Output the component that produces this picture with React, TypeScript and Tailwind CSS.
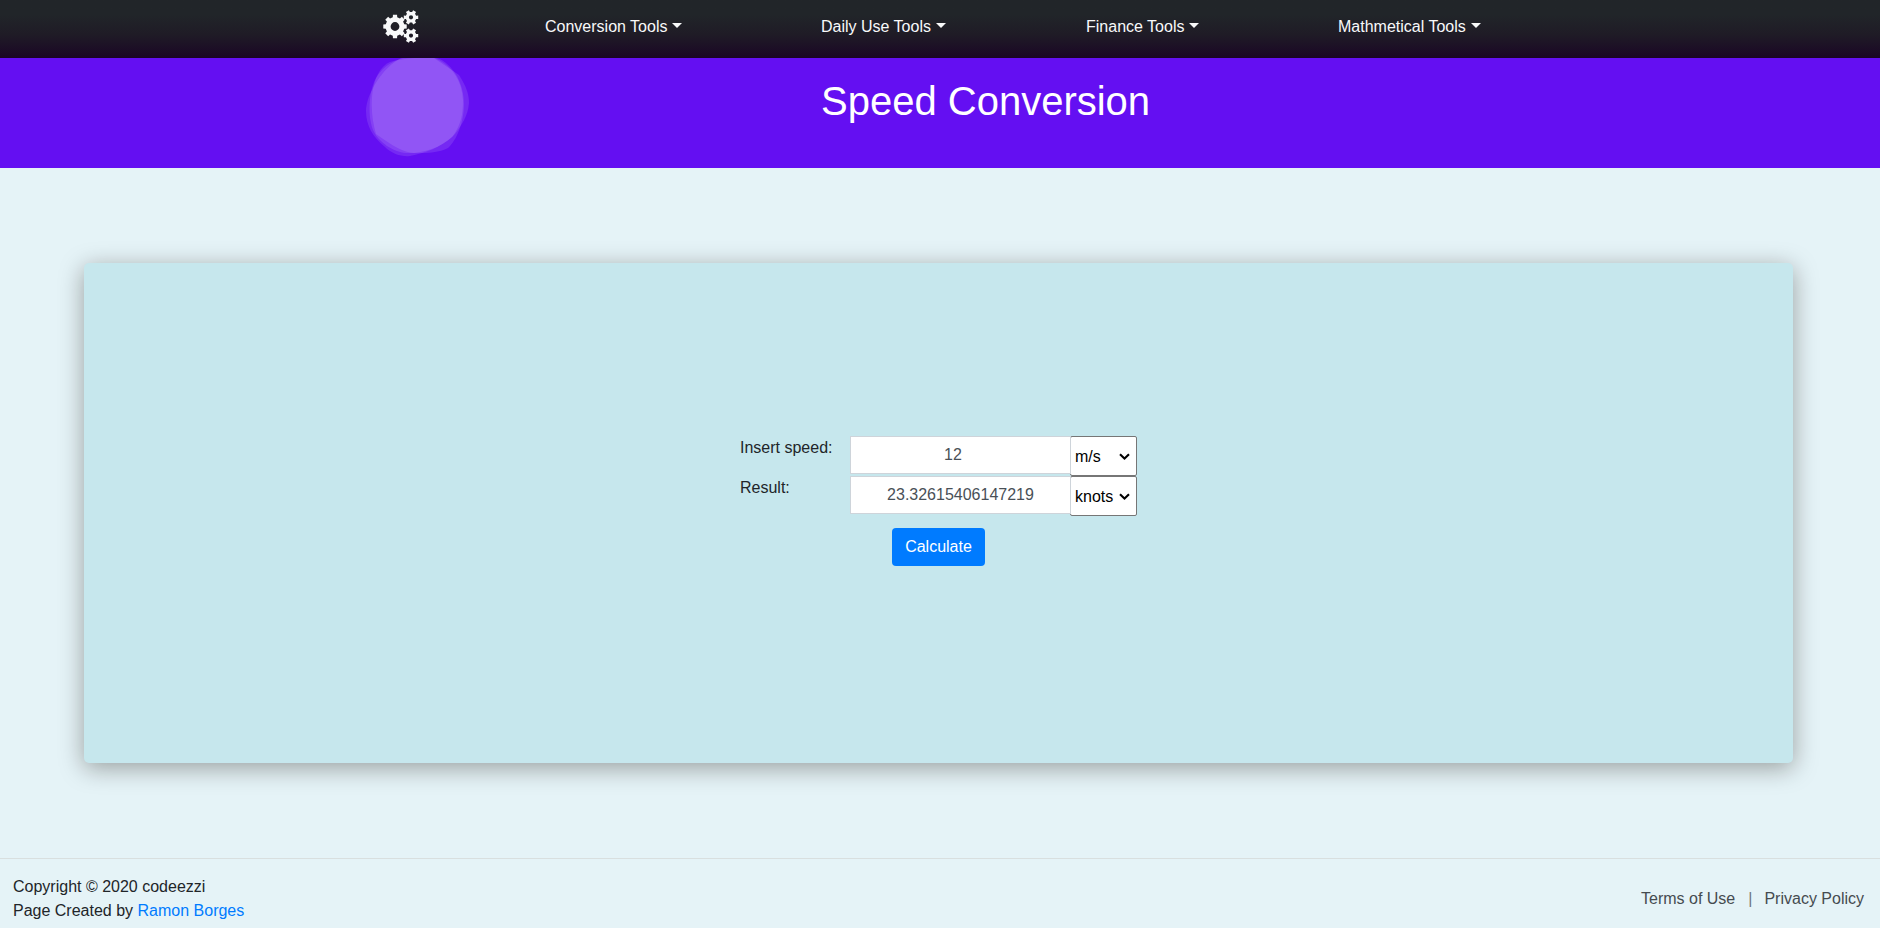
import React, { useState } from "react";

function gearPath(cx: number, cy: number, inner: number, outer: number, hole: number, teeth: number, start: number) {
  const pts: string[] = [];
  const step = (Math.PI * 2) / teeth;
  const at = (r: number, a: number) => `${(cx + r * Math.cos(a)).toFixed(2)} ${(cy + r * Math.sin(a)).toFixed(2)}`;
  for (let i = 0; i < teeth; i++) {
    const a = start + i * step;
    pts.push(at(inner, a - step * 0.3), at(outer, a - step * 0.22), at(outer, a + step * 0.22), at(inner, a + step * 0.3));
  }
  return `M${pts.join("L")}ZM${cx - hole} ${cy}a${hole} ${hole} 0 1 0 ${hole * 2} 0a${hole} ${hole} 0 1 0 ${-hole * 2} 0Z`;
}

function GearsLogo() {
  return (
    <svg width="36" height="33" viewBox="0 0 36 33" fill="#f8f9fa" fillRule="evenodd" className="shrink-0">
      <path d={gearPath(12, 16.5, 9.5, 11.9, 4.4, 8, 0)} />
      <path d={gearPath(28, 7.3, 5.4, 7.4, 2.1, 6, 0)} />
      <path d={gearPath(28, 25.6, 5.4, 7.4, 2.1, 6, 0)} />
    </svg>
  );
}

function NavItem({ label, className }: { label: string; className: string }) {
  return (
    <a href="#" className={`flex shrink-0 items-center whitespace-nowrap text-[#f8f9fa] ${className}`}>
      {label}
      <span className="mb-[3px] ml-[5px] border-x-[5px] border-t-[5px] border-x-transparent border-t-[#f8f9fa]" />
    </a>
  );
}

function Blob() {
  return (
    <svg width="106" height="110" viewBox="364 58 106 110" className="shrink-0" fill="#ffffff">
      <path fillOpacity="0.11" d="M401 58C412 54 428 54 439 60C452 67 462 80 463 100C463 113 462 123 453 136C440 148 425 153 410 156C402 157 392 154 385 147C373 137 366 126 366 111C366 94 383 67 401 58Z" />
      <path fillOpacity="0.11" d="M407 57C421 55 437 55 446 63C459 74 464 90 464 104C464 122 457 140 448 148C437 154 420 153 406 153C393 152 379 142 374 132C368 120 368 97 374 82C380 68 393 60 407 57Z" />
      <path fillOpacity="0.11" d="M390 62C402 58 425 57 434 58L459 75C466 86 469 94 469 103C468 116 461 126 455 134C445 145 431 151 414 153C403 152 394 147 376 134C371 118 370 96 375 81C378 72 383 65 390 62Z" />
    </svg>
  );
}

function UnitSelect({ value, options, onChange }: { value: string; options: string[]; onChange: (v: string) => void }) {
  return (
    <div className="relative h-10 w-[67px]">
      <select
        value={value}
        onChange={(e) => onChange(e.target.value)}
        className="h-10 w-[67px] appearance-none rounded-[2px] border border-[#767676] bg-white pt-px pl-1 text-black"
      >
        {options.map((o) => (
          <option key={o}>{o}</option>
        ))}
      </select>
      <svg width="11" height="8" viewBox="0 0 11 8" className="pointer-events-none absolute top-[17px] right-[7px]">
        <path d="M1 1.3 5.5 5.6 10 1.3" fill="none" stroke="#000" strokeWidth="2.1" />
      </svg>
    </div>
  );
}

const units = ["m/s", "km/h", "mph", "knots"];

export default function App() {
  const [speed, setSpeed] = useState("12");
  const [from, setFrom] = useState("m/s");
  const [to, setTo] = useState("knots");
  const field = "relative z-10 h-[38px] w-[221px] border border-[#ced4da] bg-white pl-3 text-center text-[#495057] outline-none";

  return (
    <div className="flex h-[928px] flex-col overflow-hidden bg-[#e5f3f7] font-['Liberation_Sans',Arial,sans-serif] text-base leading-6 text-[#212529]">
      <nav className="flex h-[58px] shrink-0 items-start bg-linear-to-b from-[#212529] from-25% via-[#1f1b26] via-60% to-[#1a0525] pl-[383px]">
        <div className="pt-[10px]">
          <GearsLogo />
        </div>
        <div className="flex pt-[15px]">
          <NavItem label="Conversion Tools" className="ml-[126px] w-[276px]" />
          <NavItem label="Daily Use Tools" className="w-[265px]" />
          <NavItem label="Finance Tools" className="w-[252px]" />
          <NavItem label="Mathmetical Tools" className="" />
        </div>
      </nav>

      <header className="flex h-[110px] shrink-0 bg-[#640ff2] pl-[364px]">
        <Blob />
        <h1 className="ml-[351px] pt-[19px] text-[40px] leading-[48px] text-white">Speed Conversion</h1>
      </header>

      <main className="mt-[95px] ml-[84px] flex h-[500px] w-[1709px] shrink-0 flex-col items-center rounded-[5px] bg-[#c6e7ed] pt-[173px] shadow-[0_5px_25px_rgba(18,10,4,0.36)]">
        <div className="grid grid-cols-[110px_220px_67px]">
          <label htmlFor="speed">Insert speed:</label>
          <input id="speed" className={`${field} pr-[27px]`} value={speed} onChange={(e) => setSpeed(e.target.value)} />
          <UnitSelect value={from} options={units} onChange={setFrom} />
          <label htmlFor="result">Result:</label>
          <input id="result" className={`${field} pr-3`} value="23.32615406147219" readOnly />
          <UnitSelect value={to} options={units} onChange={setTo} />
        </div>
        <button className="mt-3 h-[38px] w-[93px] rounded-[4px] bg-[#007bff] text-white">Calculate</button>
      </main>

      <footer className="mt-[95px] flex h-[70px] shrink-0 items-start justify-between border-t border-[#d9dfdf] pr-4 pl-[13px]">
        <div className="pt-4">
          <p>Copyright © 2020 codeezzi</p>
          <p>
            Page Created by <a href="#" className="text-[#007bff]">Ramon Borges</a>
          </p>
        </div>
        <div className="flex pt-[28px] text-[#454b50]">
          <a href="#">Terms of Use</a>
          <span className="mr-3 ml-[13px] text-[#6c757d]">|</span>
          <a href="#">Privacy Policy</a>
        </div>
      </footer>
    </div>
  );
}
